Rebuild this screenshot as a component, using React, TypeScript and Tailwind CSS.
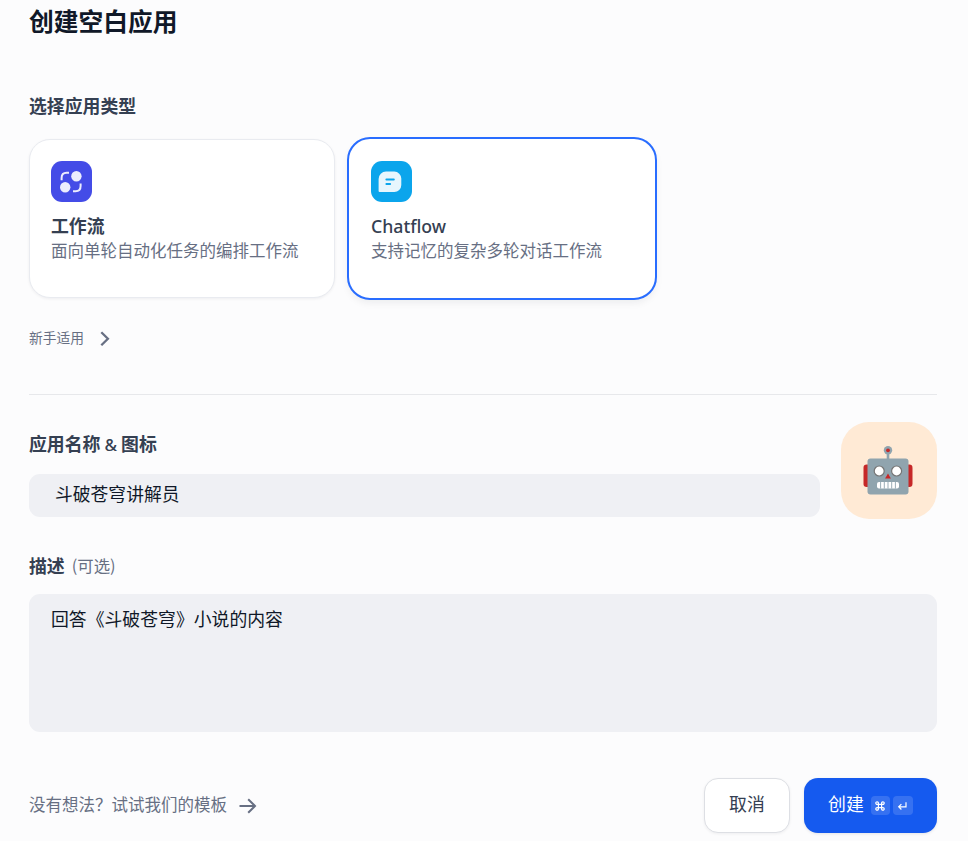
import type { ReactNode } from "react";
import clsx from "clsx";

function WorkflowIcon() {
  return (
    <svg className="mr-px h-[22px] w-[22px]" viewBox="0 0 22 22" fill="none">
      <path
        d="M1.6 9.3V7C1.6 3.8 3.4 1.8 6.6 1.8H9M20.6 12.6v2.4c0 3.2-1.8 5.2-5 5.2H13"
        stroke="#ECEDFD"
        strokeWidth="2"
      />
      <circle cx="16.4" cy="5.2" r="5.2" fill="#ECEDFD" />
      <circle cx="5.2" cy="16.3" r="5.2" fill="#ECEDFD" />
    </svg>
  );
}

function ChatflowIcon() {
  return (
    <svg className="mr-[3px] h-[22px] w-[24px]" viewBox="0 0 24 22" fill="none">
      <path
        d="M8 .6h8.3a7 7 0 0 1 7 7v6.4a7 7 0 0 1-7 7H1.6a1 1 0 0 1-1-1V8A7.4 7.4 0 0 1 8 .6Z"
        fill="#E7F6FD"
      />
      <path
        d="M8.4 8.6h7.4M8.4 13h3.7"
        stroke="#0BA5EC"
        strokeWidth="2"
        strokeLinecap="round"
      />
    </svg>
  );
}

function RobotIcon() {
  return (
    <svg className="mt-[3px] mr-0.5 h-[52px] w-[52px]" viewBox="0 0 52 52">
      <rect x="1.5" y="18.5" width="7" height="22.5" rx="3.2" fill="#C62828" />
      <rect x="43.5" y="18.5" width="7" height="22.5" rx="3.2" fill="#C62828" />
      <path d="M26 4v10" stroke="#90A4AE" strokeWidth="2.6" />
      <circle cx="26" cy="4.3" r="4.2" fill="#90A4AE" />
      <circle cx="26" cy="4.3" r="1.9" fill="#C62828" />
      <rect x="5.5" y="12.5" width="41" height="36" rx="3" fill="#90A4AE" />
      <circle cx="17.2" cy="25" r="5" fill="#fff" stroke="#757575" strokeWidth="1.2" />
      <circle cx="34.6" cy="25" r="5" fill="#fff" stroke="#757575" strokeWidth="1.2" />
      <path d="m26 27.4 2.9 5.2h-5.8Z" fill="#C62828" />
      <rect x="15" y="36" width="22" height="6.6" rx="2" fill="#fff" />
      <path
        d="M18.6 36v6.6M22.3 36v6.6M26 36v6.6M29.7 36v6.6M33.4 36v6.6"
        stroke="#90A4AE"
        strokeWidth="0.9"
      />
    </svg>
  );
}

type AppTypeCardProps = {
  icon: ReactNode;
  iconClass: string;
  title: ReactNode;
  description: string;
  active?: boolean;
};

function AppTypeCard({ icon, iconClass, title, description, active }: AppTypeCardProps) {
  return (
    <div
      className={clsx(
        "h-[159px] w-[306px] rounded-[21px] border bg-white p-[21px]",
        active
          ? "border-white shadow-[0_4px_8px_rgba(16,24,40,0.08)] outline-2 outline-[#296DFF]"
          : "border-[#E9EBF0] shadow-[0_1px_3px_rgba(16,24,40,0.06)]"
      )}
    >
      <div className={clsx("flex h-[41px] w-[41px] items-center justify-center rounded-[11px]", iconClass)}>
        {icon}
      </div>
      <div className="mt-[11px] h-[25px] text-[17.88px] leading-6 font-bold text-[#354052]">{title}</div>
      <div className="text-[16.5px] leading-6 text-[#676F83]">{description}</div>
    </div>
  );
}

export default function App() {
  return (
    <div className="h-[841px] w-[968px] overflow-hidden bg-[#FCFCFD] pr-[31px] pl-[29px] font-['Noto_Sans_CJK_SC',sans-serif] text-[#354052]">
      <h1 className="h-11 text-[24.75px] leading-[40px] font-bold text-[#101828]">创建空白应用</h1>

      <h2 className="mt-[49px] h-[25px] text-[17.88px] leading-6 font-bold">选择应用类型</h2>
      <div className="mt-[21px] flex gap-[14px]">
        <AppTypeCard
          icon={<WorkflowIcon />}
          iconClass="bg-[#444CE7]"
          title="工作流"
          description="面向单轮自动化任务的编排工作流"
        />
        <AppTypeCard
          active
          icon={<ChatflowIcon />}
          iconClass="bg-[#0BA5EC]"
          title={<span className="font-['Noto_Sans'] text-[17.7px] font-medium">Chatflow</span>}
          description="支持记忆的复杂多轮对话工作流"
        />
      </div>

      <div className="mt-[30px] flex h-5 items-center text-[13.75px] text-[#676F83]">
        <span className="pb-0.5 leading-5">新手适用</span>
        <svg className="ml-4 h-[15px] w-[10px]" viewBox="0 0 10 15" fill="none">
          <path d="m1.3 1.2 6.6 6.5-6.6 6.5" stroke="#676F83" strokeWidth="2.3" />
        </svg>
      </div>

      <div className="mt-[46px] h-px bg-[#E7E8EB]" />

      <div className="mt-[27px] flex justify-between">
        <div className="w-[791px] pt-2">
          <h2 className="h-[27px] text-[17.88px] leading-[26px] font-bold">
            应用名称 <span className="font-['Noto_Sans'] text-[17px] font-medium">&amp;</span> 图标
          </h2>
          <div className="mt-[17px] h-[43px] rounded-[11px] bg-[#EFF0F4] px-[26px] text-[17.8px] leading-[39px] text-[#101828]">
            斗破苍穹讲解员
          </div>
        </div>
        <div className="flex h-[97px] w-24 items-center justify-center rounded-[28px] bg-[#FFEAD5]">
          <RobotIcon />
        </div>
      </div>

      <div className="mt-[34px] flex h-[26px] items-start">
        <h2 className="text-[17.88px] leading-6 font-bold">描述</h2>
        <span className="ml-[7px] text-[16.4px] leading-6 text-[#676F83]">(可选)</span>
      </div>
      <div className="mt-[15px] h-[138px] rounded-[11px] bg-[#EFF0F4] px-[22px] py-3 text-[17.85px] leading-6 text-[#101828]">
        回答《斗破苍穹》小说的内容
      </div>

      <div className="mt-[46px] flex h-[55px] items-center justify-between">
        <div className="flex items-center text-[16.5px] leading-6 text-[#676F83]">
          <span className="-mt-0.5 pb-0.5">没有想法？试试我们的模板</span>
          <svg className="ml-3 h-4 w-[18px]" viewBox="0 0 18 16" fill="none">
            <path d="M.5 8h15.6M9.2 1.2 16 8l-6.8 6.8" stroke="#676F83" strokeWidth="2" />
          </svg>
        </div>
        <div className="flex gap-[14px]">
          <button className="h-[55px] w-[86px] rounded-[14px] border border-[#DDDFE4] bg-white pb-1 text-[17.9px] shadow-[0_1px_3px_rgba(16,24,40,0.06)]">
            取消
          </button>
          <button className="flex h-[55px] w-[133px] items-center rounded-[14px] bg-[#155AEF] pl-6 text-[17.9px] text-white shadow-[0_1px_3px_rgba(16,24,40,0.1)]">
            <span className="pb-1">创建</span>
            <span className="ml-[7px] flex gap-[3px]">
              <kbd className="flex h-[19px] w-[19px] items-center justify-center rounded bg-white/14">
                <svg className="h-[10px] w-[10px]" viewBox="0 0 10 10" fill="none" stroke="#fff" strokeWidth="1.2">
                  <path d="M3.4 3.4V2.2A1.3 1.3 0 1 0 2.1 3.4h5.8a1.3 1.3 0 1 0-1.3-1.2v5.6a1.3 1.3 0 1 0 1.3-1.2H2.1a1.3 1.3 0 1 0 1.3 1.2V3.4Z" />
                </svg>
              </kbd>
              <kbd className="flex h-[19px] w-5 items-center justify-center rounded bg-white/14">
                <svg className="mr-0.5 h-[10px] w-[10px]" viewBox="0 0 10 10" fill="none" stroke="#fff" strokeWidth="1.2">
                  <path d="M9 1.2v4.6H1.8M4.4 3.1 1.7 5.8l2.7 2.7" />
                </svg>
              </kbd>
            </span>
          </button>
        </div>
      </div>
    </div>
  );
}
